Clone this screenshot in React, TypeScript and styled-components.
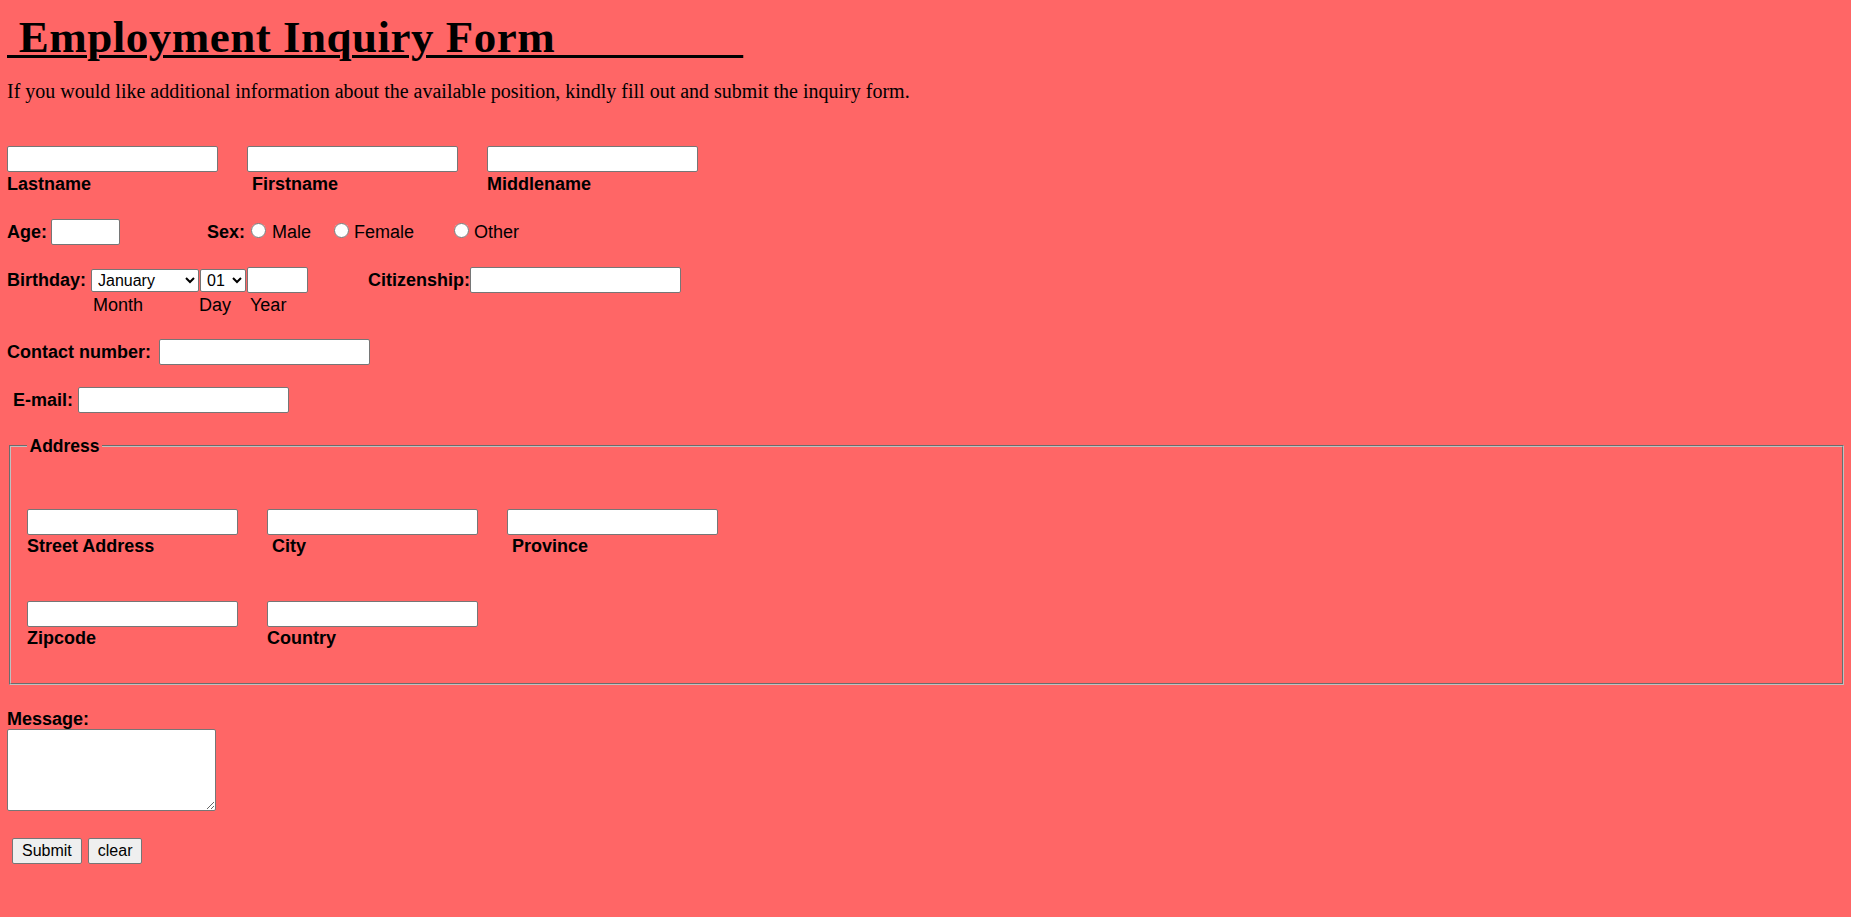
import React from "react";
import styled, { createGlobalStyle } from "styled-components";

const GlobalStyle = createGlobalStyle`
  html, body {
    margin: 0;
    padding: 0;
    background: #ff6666;
  }
  body {
    font-family: "Liberation Serif", "Times New Roman", serif;
    color: #000;
  }
`;

const Page = styled.form`
  display: flex;
  flex-direction: column;
  align-items: flex-start;
  padding: 7px 5px 40px 7px;
  min-height: 917px;
  box-sizing: border-box;
`;

const Title = styled.h1`
  margin: 0;
  font-family: "Liberation Serif", "Times New Roman", serif;
  font-size: 45px;
  font-weight: 700;
  line-height: 60px;
  letter-spacing: 0.5px;
  white-space: pre;
  text-decoration: underline;
  text-decoration-thickness: 3px;
  text-underline-offset: 3px;
`;

const Intro = styled.p`
  margin: 12px 0 0;
  font-size: 20px;
  line-height: 24px;
`;

const FieldGrid = styled.div<{ $top: number }>`
  display: grid;
  grid-template-columns: repeat(3, 211px);
  column-gap: 29px;
  margin-top: ${(p) => p.$top}px;
`;

const FieldCell = styled.div`
  display: flex;
  flex-direction: column;
  align-items: flex-start;
`;

const TextInput = styled.input<{ $w?: number; $ml?: number }>`
  box-sizing: border-box;
  width: ${(p) => p.$w ?? 211}px;
  height: 26px;
  margin: 0 0 0 ${(p) => p.$ml ?? 0}px;
  padding: 1px 3px;
  border: 1px solid #767676;
  border-radius: 2px;
  background: #fff;
  font-family: "Liberation Sans", Arial, sans-serif;
  font-size: 16px;
  flex: none;
`;

const FieldLabel = styled.span<{ $indent?: number; $ml?: number; $top?: number }>`
  display: block;
  font-family: "Liberation Sans", Arial, sans-serif;
  font-weight: 700;
  font-size: 18px;
  line-height: 20px;
  padding-left: ${(p) => p.$indent ?? 0}px;
  margin-left: ${(p) => p.$ml ?? 0}px;
  margin-top: ${(p) => p.$top ?? 0}px;
  white-space: nowrap;
`;

const OptionText = styled.label<{ $ml?: number }>`
  font-family: "Liberation Sans", Arial, sans-serif;
  font-weight: 400;
  font-size: 18px;
  line-height: 20px;
  margin-left: ${(p) => p.$ml ?? 0}px;
  white-space: nowrap;
`;

const Row = styled.div<{ $top: number }>`
  display: flex;
  align-items: center;
  margin-top: ${(p) => p.$top}px;
`;

const Radio = styled.input.attrs({ type: "radio" })<{ $ml: number }>`
  width: 15px;
  height: 15px;
  margin: -3px 0 0 ${(p) => p.$ml}px;
  flex: none;
`;

const Select = styled.select<{ $w: number; $ml?: number }>`
  box-sizing: border-box;
  width: ${(p) => p.$w}px;
  height: 23px;
  margin: 0 0 0 ${(p) => p.$ml ?? 0}px;
  padding: 0 2px;
  border: 1px solid #767676;
  border-radius: 2px;
  background: #fff;
  color: #000;
  font-family: "Liberation Sans", Arial, sans-serif;
  font-size: 16px;
  flex: none;
`;

const SubLabels = styled.div`
  display: grid;
  grid-template-columns: 106px 51px auto;
  padding-left: 86px;
  margin-top: 2px;
`;

const SubLabel = styled.span`
  font-family: "Liberation Sans", Arial, sans-serif;
  font-size: 18px;
  line-height: 20px;
`;

const AddressBox = styled.fieldset`
  align-self: stretch;
  margin: 23px 2px 0 2px;
  padding: 53px 15px 35px 16px;
  border: 2px groove #c0c0c0;
  min-width: 0;
`;

const Legend = styled.legend`
  padding: 0 2.5px;
  font-family: "Liberation Sans", Arial, sans-serif;
  font-weight: 700;
  font-size: 17.5px;
  line-height: 20px;
`;

const MessageArea = styled.textarea`
  box-sizing: border-box;
  width: 209px;
  height: 82px;
  margin: 0;
  border: 1px solid #767676;
  border-radius: 2px;
  background: #fff;
  font-family: "Liberation Mono", monospace;
  font-size: 13px;
`;

const ButtonRow = styled.div`
  display: flex;
  gap: 6px;
  margin: 27px 0 0 5px;
`;

const Button = styled.button`
  box-sizing: border-box;
  height: 26px;
  padding: 0 9px;
  border: 1px solid #767676;
  border-radius: 2px;
  background: #efefef;
  color: #000;
  font-family: "Liberation Sans", Arial, sans-serif;
  font-size: 16px;
`;

const months = [
  "January", "February", "March", "April", "May", "June",
  "July", "August", "September", "October", "November", "December",
];
const days = Array.from({ length: 31 }, (_, i) => String(i + 1).padStart(2, "0"));

const titleText = " Employment Inquiry Form" + "\u00A0".repeat(16);

export default function App() {
  return (
    <>
      <GlobalStyle />
      <Page onSubmit={(e) => e.preventDefault()}>
        <Title>{titleText}</Title>
        <Intro>
          If you would like additional information about the available position, kindly fill out and submit the inquiry form.
        </Intro>

        <FieldGrid $top={43}>
          <FieldCell>
            <TextInput type="text" />
            <FieldLabel $top={2}>Lastname</FieldLabel>
          </FieldCell>
          <FieldCell>
            <TextInput type="text" />
            <FieldLabel $top={2} $indent={5}>Firstname</FieldLabel>
          </FieldCell>
          <FieldCell>
            <TextInput type="text" />
            <FieldLabel $top={2}>Middlename</FieldLabel>
          </FieldCell>
        </FieldGrid>

        <Row $top={25}>
          <FieldLabel>Age:</FieldLabel>
          <TextInput type="text" $w={69} $ml={4} />
          <FieldLabel $ml={87}>Sex:</FieldLabel>
          <Radio name="sex" id="male" $ml={6} />
          <OptionText htmlFor="male" $ml={6}>Male</OptionText>
          <Radio name="sex" id="female" $ml={23} />
          <OptionText htmlFor="female" $ml={5}>Female</OptionText>
          <Radio name="sex" id="other" $ml={40} />
          <OptionText htmlFor="other" $ml={5}>Other</OptionText>
        </Row>

        <Row $top={22}>
          <FieldLabel>Birthday:</FieldLabel>
          <Select $w={108} $ml={5} defaultValue="January">
            {months.map((m) => (
              <option key={m}>{m}</option>
            ))}
          </Select>
          <Select $w={46} $ml={1} defaultValue="01">
            {days.map((d) => (
              <option key={d}>{d}</option>
            ))}
          </Select>
          <TextInput type="text" $w={61} $ml={1} />
          <FieldLabel $ml={60}>Citizenship:</FieldLabel>
          <TextInput type="text" />
        </Row>
        <SubLabels>
          <SubLabel>Month</SubLabel>
          <SubLabel>Day</SubLabel>
          <SubLabel>Year</SubLabel>
        </SubLabels>

        <Row $top={24}>
          <FieldLabel>Contact number:</FieldLabel>
          <TextInput type="text" $ml={8} />
        </Row>

        <Row $top={22}>
          <FieldLabel $indent={6}>E-mail:</FieldLabel>
          <TextInput type="text" $ml={5} />
        </Row>

        <AddressBox>
          <Legend>Address</Legend>
          <FieldGrid $top={0}>
            <FieldCell>
              <TextInput type="text" />
              <FieldLabel $top={1}>Street Address</FieldLabel>
            </FieldCell>
            <FieldCell>
              <TextInput type="text" />
              <FieldLabel $top={1} $indent={5}>City</FieldLabel>
            </FieldCell>
            <FieldCell>
              <TextInput type="text" />
              <FieldLabel $top={1} $indent={5}>Province</FieldLabel>
            </FieldCell>
          </FieldGrid>
          <FieldGrid $top={45}>
            <FieldCell>
              <TextInput type="text" />
              <FieldLabel $top={1}>Zipcode</FieldLabel>
            </FieldCell>
            <FieldCell>
              <TextInput type="text" />
              <FieldLabel $top={1}>Country</FieldLabel>
            </FieldCell>
          </FieldGrid>
        </AddressBox>

        <FieldLabel $top={24}>Message:</FieldLabel>
        <MessageArea />

        <ButtonRow>
          <Button type="submit">Submit</Button>
          <Button type="reset">clear</Button>
        </ButtonRow>
      </Page>
    </>
  );
}
